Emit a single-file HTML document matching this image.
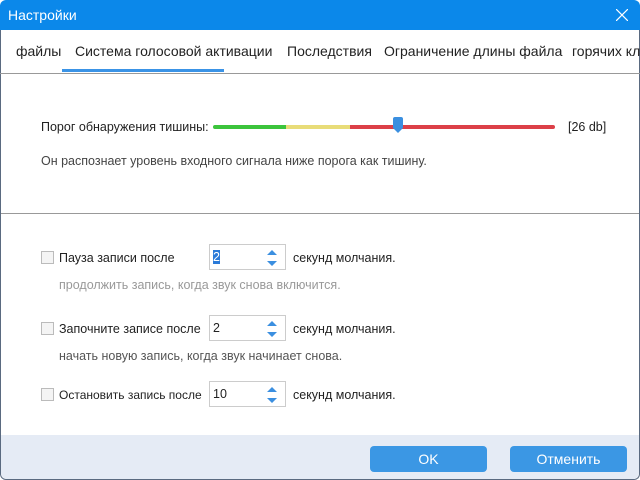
<!DOCTYPE html>
<html><head><meta charset="utf-8"><style>
*{margin:0;padding:0;box-sizing:border-box}
body{width:640px;height:480px;overflow:hidden;font-family:"Liberation Sans","DejaVu Sans",sans-serif;background:#fff;position:relative;color:#222}
.title{position:absolute;left:0;top:0;width:640px;height:30px;background:#0b88ea;color:#fff;font-size:14px;line-height:30px;padding-left:8px;border-radius:6px 6px 0 0}
.x{position:absolute;right:12px;top:9px}
.frame{position:absolute;left:0;top:30px;width:640px;height:450px;border:1px solid #5a6a80;border-top:none;border-radius:0 0 6px 6px}
.tabs{position:absolute;top:30px;left:0;width:640px;height:44px;border-bottom:1px solid #999;font-size:14px;white-space:nowrap;overflow:hidden}
.tabs span{position:absolute;top:13px}
.ul{position:absolute;left:62px;top:69px;width:162px;height:3px;background:#3a93e6}
.t{position:absolute;font-size:12.5px;white-space:nowrap}
.g{color:#999}
.track{position:absolute;top:125px;height:4px}
.sep{position:absolute;left:1px;top:213px;width:638px;height:1px;background:#999}
.cb{position:absolute;width:13px;height:13px;border:1px solid #bbb;background:#f4f4f4}
.sp{position:absolute;width:77px;height:26px;border:1px solid #ccc;font-size:12.5px;padding:5px 0 0 3px}
.sp svg{position:absolute;right:8px;top:4px}
.foot{position:absolute;left:1px;top:435px;width:638px;height:44px;background:#e5ebf5;border-radius:0 0 6px 6px}
.btn{position:absolute;top:446px;width:117px;height:26px;background:#3b97e4;border-radius:4px;color:#fff;font-size:14px;text-align:center;line-height:26px}
</style></head><body>
<div class="frame"></div>
<div class="title">Настройки<svg class="x" width="12" height="12"><path d="M0 0L12 12M12 0L0 12" stroke="#fff" stroke-width="1.2"/></svg></div>
<div class="tabs">
<span style="left:16px">файлы</span>
<span style="left:75px">Система голосовой активации</span>
<span style="left:287px">Последствия</span>
<span style="left:384px">Ограничение длины файла</span>
<span style="left:572px">горячих кл</span>
</div>
<div class="ul"></div>
<div class="t" style="left:41px;top:120px">Порог обнаружения тишины:</div>
<div class="track" style="left:213px;width:73px;background:#3cc43c;border-radius:2px 0 0 2px"></div>
<div class="track" style="left:286px;width:64px;background:#e8dc78"></div>
<div class="track" style="left:350px;width:205px;background:#dc4048;border-radius:0 2px 2px 0"></div>
<svg style="position:absolute;left:392px;top:117px" width="12" height="17"><path d="M1 2Q1 0 3 0H9Q11 0 11 2V11L6 16L1 11Z" fill="#3b8fe0"/></svg>
<div class="t" style="left:568px;top:120px">[26 db]</div>
<div class="t" style="left:41px;top:154px;color:#444">Он распознает уровень входного сигнала ниже порога как тишину.</div>
<div class="sep"></div>

<div class="cb" style="left:41px;top:251px"></div>
<div class="t" style="left:59px;top:251px">Пауза записи после</div>
<div class="sp" style="left:209px;top:244px"><span style="background:#2a7ad8;color:#fff">2</span><svg width="10" height="18"><path d="M0 6L5 1L10 6Z M0 12L5 17L10 12Z" fill="#3b8fe0"/></svg></div>
<div class="t" style="left:293px;top:251px">секунд молчания.</div>
<div class="t g" style="left:59px;top:278px">продолжить запись, когда звук снова включится.</div>

<div class="cb" style="left:41px;top:322px"></div>
<div class="t" style="left:59px;top:322px">Започните записе после</div>
<div class="sp" style="left:209px;top:315px">2<svg width="10" height="18"><path d="M0 6L5 1L10 6Z M0 12L5 17L10 12Z" fill="#3b8fe0"/></svg></div>
<div class="t" style="left:293px;top:322px">секунд молчания.</div>
<div class="t" style="left:59px;top:349px;color:#555">начать новую запись, когда звук начинает снова.</div>

<div class="cb" style="left:41px;top:388px"></div>
<div class="t" style="left:59px;top:388px;font-size:12px">Остановить запись после</div>
<div class="sp" style="left:209px;top:381px">10<svg width="10" height="18"><path d="M0 6L5 1L10 6Z M0 12L5 17L10 12Z" fill="#3b8fe0"/></svg></div>
<div class="t" style="left:293px;top:388px">секунд молчания.</div>

<div class="foot"></div>
<div class="btn" style="left:370px">OK</div>
<div class="btn" style="left:510px">Отменить</div>
</body></html>
